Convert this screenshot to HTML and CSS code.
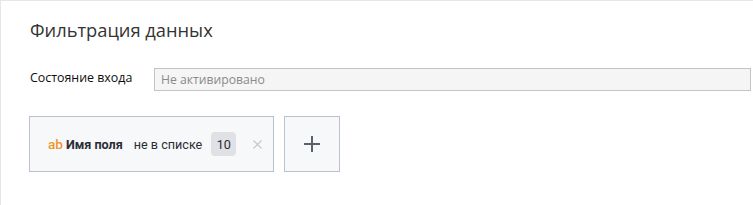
FILE: index.html
```html
<!DOCTYPE html>
<html lang="ru">
<head>
<meta charset="utf-8">
<link rel="stylesheet" href="styles.css">
</head>
<body>
<div class="panel">
  <h1 class="title">Фильтрация данных</h1>
  <div class="row">
    <label class="label">Состояние входа</label>
    <div class="input">Не активировано</div>
  </div>
  <div class="filters">
    <div class="chip">
      <span class="type">ab</span>
      <span class="field">Имя поля</span>
      <span class="op">не в списке</span>
      <span class="badge">10</span>
      <svg class="close" width="9" height="9" viewBox="0 0 9 9"><path d="M0.5 0.5L8.5 8.5M8.5 0.5L0.5 8.5" stroke="#c4c7cf" stroke-width="1.1" fill="none"/></svg>
    </div>
    <button class="add">
      <svg width="18" height="18" viewBox="0 0 18 18"><path d="M9 1V17M1 9H17" stroke="#5b6170" stroke-width="2" fill="none"/></svg>
    </button>
  </div>
</div>
</body>
</html>
```
FILE: styles.css
```css
html, body {
  margin: 0;
  padding: 0;
  background: #fff;
}
.panel {
  box-sizing: border-box;
  height: 205px;
  border-top: 1px solid #e6e6e6;
  border-left: 1px solid #e6e6e6;
  padding: 15px 0 0 29px;
  font-family: "Open Sans", sans-serif;
}
.title {
  margin: 0;
  font-size: 18.3px;
  font-weight: 400;
  color: #333;
  line-height: 28px;
}
.row {
  display: flex;
  align-items: center;
  margin-top: 24px;
}
.label {
  width: 124px;
  font-size: 12.4px;
  color: #0d0d0d;
  line-height: 18px;
  margin-top: -4px;
  white-space: nowrap;
}
.input {
  box-sizing: border-box;
  flex: 1;
  height: 23px;
  margin-right: 2px;
  border: 1px solid #c4c4c4;
  background: #f5f5f5;
  color: #8a8a8a;
  font-size: 12.2px;
  line-height: 21px;
  padding-left: 6px;
}
.filters {
  display: flex;
  gap: 10px;
  margin-top: 25px;
  margin-left: -1px;
}
.chip {
  box-sizing: border-box;
  height: 56px;
  width: 245px;
  flex-shrink: 0;
  border: 1px solid #bcc1d0;
  background: #f7f8fa;
  display: flex;
  align-items: center;
  padding-left: 18px;
  font-family: Roboto, sans-serif;
  font-size: 12.6px;
  color: #222;
  white-space: nowrap;
}
.chip > * {
  flex-shrink: 0;
}
.type {
  color: #f0952b;
  font-weight: 500;
  font-size: 13.5px;
  margin-right: 3px;
}
.field {
  font-weight: 700;
  color: #2a2d33;
  margin-right: 11px;
}
.op {
  color: #2a2d33;
  margin-right: 9px;
}
.badge {
  box-sizing: border-box;
  width: 25px;
  height: 24px;
  border-radius: 4px;
  background: #dfe1e6;
  display: flex;
  align-items: center;
  justify-content: center;
  color: #2a2d33;
  margin-right: 17px;
}
.close {
  display: block;
}
.add {
  box-sizing: border-box;
  width: 56px;
  height: 56px;
  flex-shrink: 0;
  border: 1px solid #bcc1d0;
  background: #f7f8fa;
  padding: 0;
  display: flex;
  align-items: center;
  justify-content: center;
}
```
